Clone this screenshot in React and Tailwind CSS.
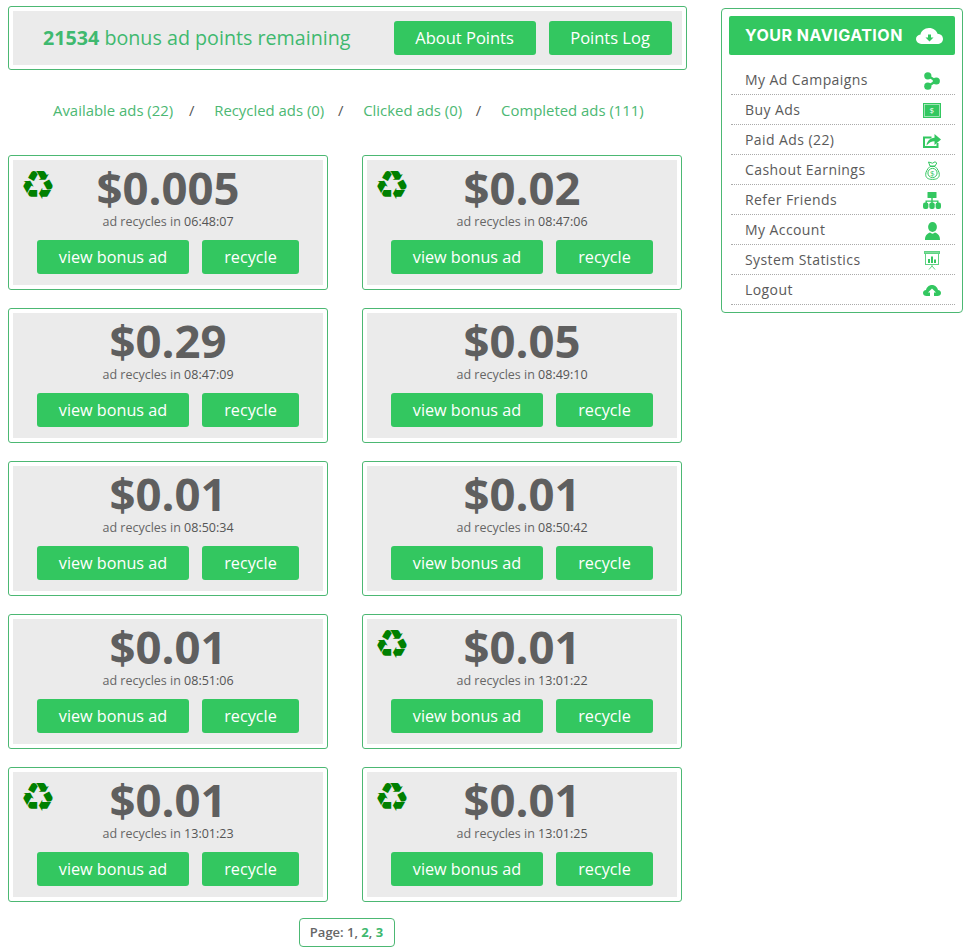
import React from "react";

const ads = [
  { price: "$0.005", time: "06:48:07", icon: true },
  { price: "$0.02", time: "08:47:06", icon: true },
  { price: "$0.29", time: "08:47:09" },
  { price: "$0.05", time: "08:49:10" },
  { price: "$0.01", time: "08:50:34" },
  { price: "$0.01", time: "08:50:42" },
  { price: "$0.01", time: "08:51:06" },
  { price: "$0.01", time: "13:01:22", icon: true },
  { price: "$0.01", time: "13:01:23", icon: true },
  { price: "$0.01", time: "13:01:25", icon: true },
];

const GREEN = "#33c760";

const HeaderCloud = () => (
  <svg width="27" height="16" viewBox="0 0 27 16">
    <path d="M7 16C3 16 0 14 0 11C0 8.5 2 6.8 4.5 6.5C5 3 8.5 0 13 0C17.5 0 20.5 2.5 21.5 5.8C24.8 6 27 8 27 11C27 14 24.5 16 21 16Z" fill="#fff" />
    <path d="M12 6.5h3v3h2.5L13.5 13.5 9.5 9.5H12Z" fill={GREEN} />
  </svg>
);

const ShareIcon = () => (
  <svg width="16" height="18" viewBox="0 0 16 18" fill={GREEN}>
    <circle cx="3.8" cy="3.8" r="3.6" />
    <circle cx="12.3" cy="9" r="3.6" />
    <circle cx="3.8" cy="14.2" r="3.6" />
    <path d="M3.8 3.8 12.3 9 3.8 14.2" fill="none" stroke={GREEN} strokeWidth="2.4" />
  </svg>
);

const BillIcon = () => (
  <svg width="18" height="15" viewBox="0 0 18 15">
    <rect width="18" height="15" fill={GREEN} />
    <rect x="1.6" y="1.6" width="14.8" height="11.8" fill="none" stroke="#c9f0d6" strokeWidth="0.7" />
    <text x="9" y="10.3" textAnchor="middle" fontSize="8" fill="#fff" fontFamily="Open Sans, sans-serif">$</text>
  </svg>
);

const ShareBoxIcon = () => (
  <svg width="18" height="14" viewBox="0 0 18 14">
    <path d="M0 2.5H8.5V4.5H2V12H13.5V9H15.5V14H0Z" fill={GREEN} />
    <path d="M3.5 11.5C4 7 7 4.2 11.5 3.8V0L18 5.5L11.5 11V7.2C8.5 7.2 6 8.6 3.5 11.5Z" fill={GREEN} />
  </svg>
);

const BagIcon = () => (
  <svg width="15" height="19" viewBox="0 0 15 19" fill="none" stroke={GREEN} strokeWidth="1">
    <path d="M3.5 1 7.5 2.2 10 .8 11.8 2 10 5H5Z" />
    <path d="M5 5.5C2.2 8 .7 11 .7 13.5.7 16.8 3 18.4 7.5 18.4S14.3 16.8 14.3 13.5C14.3 11 12.8 8 10 5.5Z" />
    <circle cx="7.5" cy="12" r="4.6" />
    <text x="7.5" y="15" textAnchor="middle" fontSize="8" fill={GREEN} stroke="none" fontFamily="Open Sans, sans-serif">$</text>
  </svg>
);

const SitemapIcon = () => (
  <svg width="18" height="17" viewBox="0 0 18 17" fill={GREEN}>
    <rect x="4.5" y="0" width="9" height="6" rx="0.5" />
    <path d="M8.3 6h1.4v2.5h5.8V11h-1.4V9.8H9.7V11H8.3V9.8H3.9V11H2.5V8.5h5.8Z" />
    <rect x="0" y="10.5" width="5.4" height="6.5" rx="2" />
    <rect x="6.3" y="10.5" width="5.4" height="6.5" rx="2" />
    <rect x="12.6" y="10.5" width="5.4" height="6.5" rx="2" />
  </svg>
);

const UserIcon = () => (
  <svg width="15" height="18" viewBox="0 0 15 18" fill={GREEN}>
    <ellipse cx="7.5" cy="5" rx="4.4" ry="5" />
    <path d="M0 18C0 14 1.5 12 5 10.6C6.5 12 8.5 12 10 10.6C13.5 12 15 14 15 18Z" />
  </svg>
);

const BoardIcon = () => (
  <svg width="16" height="19" viewBox="0 0 16 19" fill="none" stroke="#5fd383" strokeWidth="1">
    <rect x="0.5" y="0.5" width="15" height="2" fill="#7fdc9c" />
    <rect x="1.5" y="2.5" width="13" height="11" />
    <path d="M5 8v4M8 5.5v6.5M11 8.5v3.5" stroke={GREEN} strokeWidth="2" />
    <path d="M8 13.5v1.5M8 15 5 18.5M8 15l3 3.5" />
  </svg>
);

const LogoutIcon = () => (
  <svg width="18" height="11" viewBox="0 0 18 11" fill={GREEN}>
    <path d="M3.5 11C1.5 11 0 9.7 0 8C0 6.4 1.2 5.3 3 5.1C3.6 2.2 6 0 9 0C12 0 14.4 2.2 15 5.1C16.8 5.3 18 6.4 18 8C18 9.7 16.5 11 14.5 11H11V7.5H13L9 3.5 5 7.5H7V11Z" />
  </svg>
);

const nav = [
  { label: "My Ad Campaigns", icon: <ShareIcon />, offset: "mt-[2px]" },
  { label: "Buy Ads", icon: <BillIcon />, offset: "mt-[2px]" },
  { label: "Paid Ads (22)", icon: <ShareBoxIcon />, offset: "mt-[3px]" },
  { label: "Cashout Earnings", icon: <BagIcon />, offset: "mt-[2px]" },
  { label: "Refer Friends", icon: <SitemapIcon />, offset: "mt-[2px]" },
  { label: "My Account", icon: <UserIcon />, offset: "mt-[2px]" },
  { label: "System Statistics", icon: <BoardIcon />, offset: "mt-[1px]" },
  { label: "Logout", icon: <LogoutIcon />, offset: "mt-[2px]" },
];

const tabs = ["Available ads (22)", "Recycled ads (0)", "Clicked ads (0)", "Completed ads (111)"];

const AdCard = ({ ad }) => (
  <div className="relative h-[135px] w-[320px] rounded-[3px] border border-[#4cb873] bg-white p-1">
    <div className="flex h-full flex-col items-center bg-[#ebebeb]">
      {ad.icon && (
        <span className="absolute left-[11px] top-[4px] font-['DejaVu_Sans'] text-[40px] leading-[50px] text-[#008000]">
          ♻
        </span>
      )}
      <div className="mt-[6px] text-[45.5px] font-bold leading-[42px] text-[#5f5f5f]">{ad.price}</div>
      <div className="mt-[6px] text-[12.5px] leading-[16px] text-[#666]">
        ad recycles in <span className="font-medium text-[#555]">{ad.time}</span>
      </div>
      <div className="mt-[10px] flex gap-[13px]">
        <button className="h-[34px] w-[152px] rounded-[3px] bg-[#33c760] text-[16.2px] text-white">view bonus ad</button>
        <button className="h-[34px] w-[97px] rounded-[3px] bg-[#33c760] text-[16.2px] text-white">recycle</button>
      </div>
    </div>
  </div>
);

export default function App() {
  return (
    <div className="flex min-h-[952px] items-start bg-white pl-2 font-['Open_Sans',sans-serif]">
      <main className="mt-[6px] w-[679px]">
        <div className="h-[64px] rounded-[3px] border border-[#4cb873] p-1">
          <div className="flex h-full items-center bg-[#ebebeb] pl-[30px]">
            <div className="text-[19.7px] text-[#3fb96f]">
              <span className="font-bold">21534</span> bonus ad points remaining
            </div>
            <button className="ml-[43px] h-[34px] w-[142px] rounded-[3px] bg-[#33c760] text-[16.5px] text-white">About Points</button>
            <button className="ml-[13px] h-[34px] w-[123px] rounded-[3px] bg-[#33c760] text-[16.5px] text-white">Points Log</button>
          </div>
        </div>

        <div className="mt-[29px] flex h-[22px] items-center pl-[45px] text-[14.9px] text-[#4cb873]">
          {tabs.map((tab, i) => (
            <React.Fragment key={tab}>
              {i > 0 && (
                <span className={`${i === 1 ? "ml-[13px]" : "ml-[11px]"} mr-[17px] w-[11px] text-center text-[#555]`}>/</span>
              )}
              <span>{tab}</span>
            </React.Fragment>
          ))}
        </div>

        <div className="mt-[34px] grid w-[674px] grid-cols-[320px_320px] gap-x-[34px] gap-y-[18px]">
          {ads.map((ad, i) => (
            <AdCard key={i} ad={ad} />
          ))}
        </div>

        <div className="mt-[16px] flex justify-center pr-[2px]">
          <div className="flex h-[29px] w-[96px] items-center justify-center rounded-[4px] border border-[#4cb873] text-[13px] font-semibold text-[#666]">
            Page: 1,&nbsp;<span className="font-bold text-[#3fb96f]">2</span>,&nbsp;<span className="font-bold text-[#3fb96f]">3</span>
          </div>
        </div>
      </main>

      <aside className="ml-[34px] mt-2 h-[305px] w-[242px] rounded-[4px] border border-[#4cb873] px-[7px] pt-[7px]">
        <div className="flex h-[39px] items-center justify-between rounded-[2px] bg-[#33c760] pl-4 pr-3 font-['Inter',sans-serif] text-[16px] font-bold tracking-[0.5px] text-white">
          <span className="pb-[2px]">YOUR NAVIGATION</span>
          <HeaderCloud />
        </div>
        <ul className="ml-[2px] mt-[10px]">
          {nav.map((item) => (
            <li key={item.label} className="flex h-[30px] items-center justify-between border-b border-dotted border-[#aaa] pl-[14px] text-[14px] tracking-[0.42px] text-[#5a5a5a]">
              <span>{item.label}</span>
              <span className={`mr-[13px] flex w-[20px] justify-center ${item.offset}`}>{item.icon}</span>
            </li>
          ))}
        </ul>
      </aside>
    </div>
  );
}
